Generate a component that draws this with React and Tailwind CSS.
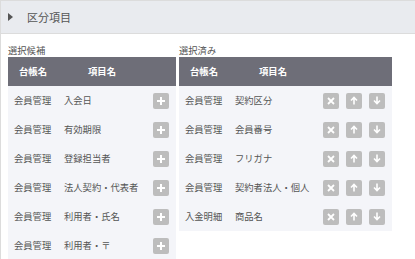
import React from 'react';

const left = [
  ['会員管理', '入会日'],
  ['会員管理', '有効期限'],
  ['会員管理', '登録担当者'],
  ['会員管理', '法人契約・代表者'],
  ['会員管理', '利用者・氏名'],
  ['会員管理', '利用者・〒'],
];

const right = [
  ['会員管理', '契約区分'],
  ['会員管理', '会員番号'],
  ['会員管理', 'フリガナ'],
  ['会員管理', '契約者法人・個人'],
  ['入金明細', '商品名'],
];

function IconBtn({ children }) {
  return (
    <span className="w-4 h-4 rounded-[2px] bg-[#bdbdbd] grid place-items-center text-white">
      {children}
    </span>
  );
}

const Plus = () => (
  <svg width="10" height="10" viewBox="0 0 10 10"><path d="M5 1v8M1 5h8" stroke="#fff" strokeWidth="2" /></svg>
);
const Cross = () => (
  <svg width="8" height="8" viewBox="0 0 8 8"><path d="M1 1l6 6M7 1L1 7" stroke="#fff" strokeWidth="1.8" /></svg>
);
const Up = () => (
  <svg width="8" height="9" viewBox="0 0 8 9"><path d="M4 8.5V2M1 4.5L4 1.5l3 3" stroke="#fff" strokeWidth="1.6" fill="none" /></svg>
);
const Down = () => (
  <svg width="8" height="9" viewBox="0 0 8 9"><path d="M4 0.5V7M1 4.5l3 3 3-3" stroke="#fff" strokeWidth="1.6" fill="none" /></svg>
);

function Table({ rows, width, actions }) {
  return (
    <div className="bg-[#f4f5f9]" style={{ width }}>
      <div className="h-[29px] bg-[#6e6e78] flex items-center text-white font-bold text-[9.3px]">
        <div className="w-[50px] text-center">台帳名</div>
        <div className="w-[88px] text-center">項目名</div>
      </div>
      {rows.map(([a, b], i) => (
        <div key={i} className="h-[29px] flex items-center text-[9.3px] text-[#555]">
          <div className="w-[50px] pl-[6px] whitespace-nowrap">{a}</div>
          <div className="w-[88px] pl-[6px] whitespace-nowrap">{b}</div>
          <div className="flex-1 flex justify-end pr-[7px] gap-[7px]">{actions}</div>
        </div>
      ))}
    </div>
  );
}

export default function App() {
  return (
    <div className="w-[415px] h-[259px] bg-white overflow-hidden border-l border-[#dcdcdc] text-[#555]" style={{ fontFamily: '"Noto Sans CJK JP", "Noto Sans", sans-serif' }}>
      <div className="h-[34px] bg-[#e9ebef] border-t border-b border-[#dcdcdc] flex items-center pl-[7px]">
        <svg width="5" height="8" viewBox="0 0 5 8"><path d="M0 0l5 4-5 4z" fill="#555" /></svg>
        <span className="ml-[14px] text-[11px] text-[#555]">区分項目</span>
      </div>
      <div className="flex gap-[3px] pl-[7px] pt-[9px]">
        <div>
          <div className="text-[9.3px] h-[14px] leading-[14px] mb-[0px]">選択候補</div>
          <Table rows={left} width={168} actions={<IconBtn><Plus /></IconBtn>} />
        </div>
        <div>
          <div className="text-[9.3px] h-[14px] leading-[14px]">選択済み</div>
          <Table rows={right} width={213} actions={<><IconBtn><Cross /></IconBtn><IconBtn><Up /></IconBtn><IconBtn><Down /></IconBtn></>} />
        </div>
      </div>
    </div>
  );
}
